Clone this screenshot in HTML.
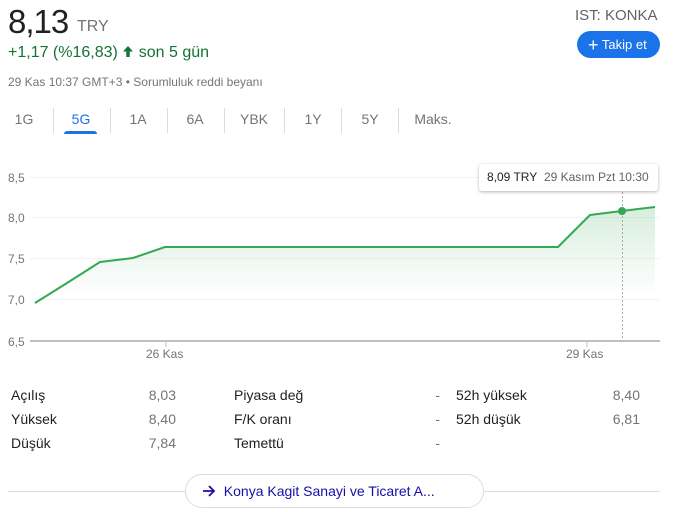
<!DOCTYPE html>
<html><head><meta charset="utf-8"><style>
*{margin:0;padding:0;box-sizing:border-box}
body{width:685px;height:512px;background:#fff;font-family:"Liberation Sans",sans-serif;position:relative;overflow:hidden;color:#202124}
.a{position:absolute;white-space:nowrap}
.tab{position:absolute;top:111px;font-size:14px;color:#70757a;transform:translateX(-50%)}
.sep{position:absolute;top:108px;width:1px;height:25px;background:#dadce0}
.lb{font-size:14px;color:#202124}
.vl{font-size:14px;color:#70757a;text-align:right}
</style></head><body>
<div class="a" style="left:8px;top:3px;font-size:33px;color:#202124;letter-spacing:-1px">8,13</div>
<div class="a" style="left:77px;top:18px;font-size:16px;color:#70757a">TRY</div>
<div class="a" style="left:8px;top:44px;font-size:16px;color:#137333">+1,17 (%16,83) <svg width="12" height="13" viewBox="0 0 12 13" style="vertical-align:-1px"><path d="M6 1L1 6.5h3.3V12h3.4V6.5H11z" fill="#137333"/></svg> son 5 gün</div>
<div class="a" style="left:8px;top:75px;font-size:12px;color:#70757a">29 Kas 10:37 GMT+3 • Sorumluluk reddi beyanı</div>
<div class="a" style="left:575px;top:7px;font-size:15px;color:#5f6368">IST: KONKA</div>
<div class="a" style="left:577px;top:31px;width:83px;height:27px;border-radius:14px;background:#1a73e8;color:#fff;font-size:13px;padding-left:11px;line-height:27px"><span style="font-size:18px;vertical-align:-2px">+</span> Takip et</div>
<div class="tab" style="left:24px">1G</div>
<div class="tab" style="left:81px;color:#1a73e8">5G</div>
<div class="tab" style="left:138px">1A</div>
<div class="tab" style="left:195px">6A</div>
<div class="tab" style="left:254px">YBK</div>
<div class="tab" style="left:313px">1Y</div>
<div class="tab" style="left:370px">5Y</div>
<div class="tab" style="left:433px">Maks.</div>
<div class="sep" style="left:53px"></div><div class="sep" style="left:110px"></div><div class="sep" style="left:167px"></div><div class="sep" style="left:224px"></div><div class="sep" style="left:284px"></div><div class="sep" style="left:341px"></div><div class="sep" style="left:398px"></div>
<div class="a" style="left:64px;top:131px;width:33px;height:3px;background:#1a73e8;border-radius:3px 3px 0 0"></div>
<svg class="a" style="left:0;top:150px" width="685" height="215" viewBox="0 150 685 215">
<defs><linearGradient id="g" x1="0" y1="207" x2="0" y2="295" gradientUnits="userSpaceOnUse"><stop offset="0" stop-color="#34a853" stop-opacity=".2"/><stop offset="1" stop-color="#34a853" stop-opacity="0"/></linearGradient></defs>
<g stroke="#f1f3f4" stroke-width="1"><line x1="30" y1="177.5" x2="660" y2="177.5"/><line x1="30" y1="217.5" x2="660" y2="217.5"/><line x1="30" y1="258.5" x2="660" y2="258.5"/><line x1="30" y1="299.5" x2="660" y2="299.5"/></g>
<g font-size="12" fill="#70757a" font-family="Liberation Sans"><text x="8" y="182">8,5</text><text x="8" y="222">8,0</text><text x="8" y="263">7,5</text><text x="8" y="304">7,0</text><text x="8" y="346">6,5</text>
<text x="146" y="358">26 Kas</text><text x="566" y="358">29 Kas</text></g>
<path d="M35 303L67 283L100 262L133 258L165 247L558 247L590 215L622 211L655 207L655 341L35 341Z" fill="url(#g)"/>
<path d="M35 303L67 283L100 262L133 258L165 247L558 247L590 215L622 211L655 207" fill="none" stroke="#34a853" stroke-width="2"/>
<line x1="30" y1="341" x2="660" y2="341" stroke="#bdc1c6" stroke-width="2"/>
<line x1="166" y1="341" x2="166" y2="347" stroke="#bdc1c6"/><line x1="587" y1="341" x2="587" y2="347" stroke="#bdc1c6"/>
<line x1="622.5" y1="192" x2="622.5" y2="341" stroke="#aaa" stroke-dasharray="2,2"/>
<circle cx="622" cy="211" r="4" fill="#34a853"/>
</svg>
<div class="a" style="left:479px;top:164px;width:179px;height:27px;background:#fff;box-shadow:0 1px 3px rgba(0,0,0,.3);border-radius:3px;font-size:12px;line-height:27px;padding-left:8px"><span style="color:#202124">8,09 TRY</span>&nbsp; <span style="color:#5f6368">29 Kasım Pzt 10:30</span></div>
<div class="a lb" style="left:11px;top:387px">Açılış</div><div class="a vl" style="left:100px;width:76px;top:387px">8,03</div>
<div class="a lb" style="left:11px;top:411px">Yüksek</div><div class="a vl" style="left:100px;width:76px;top:411px">8,40</div>
<div class="a lb" style="left:11px;top:435px">Düşük</div><div class="a vl" style="left:100px;width:76px;top:435px">7,84</div>
<div class="a lb" style="left:234px;top:387px">Piyasa değ</div><div class="a vl" style="left:400px;width:40px;top:387px">-</div>
<div class="a lb" style="left:234px;top:411px">F/K oranı</div><div class="a vl" style="left:400px;width:40px;top:411px">-</div>
<div class="a lb" style="left:234px;top:435px">Temettü</div><div class="a vl" style="left:400px;width:40px;top:435px">-</div>
<div class="a lb" style="left:456px;top:387px">52h yüksek</div><div class="a vl" style="left:560px;width:80px;top:387px">8,40</div>
<div class="a lb" style="left:456px;top:411px">52h düşük</div><div class="a vl" style="left:560px;width:80px;top:411px">6,81</div>
<div class="a" style="left:8px;top:491px;width:652px;height:1px;background:#dadce0"></div>
<div class="a" style="left:185px;top:474px;width:299px;height:34px;border:1px solid #dadce0;border-radius:17px;background:#fff;font-size:14px;line-height:32px;padding-left:16px;color:#1a0dab"><svg width="14" height="12" viewBox="0 0 14 12" style="vertical-align:-1px"><path d="M1 6h11M7 1l5 5-5 5" fill="none" stroke="#1a0dab" stroke-width="1.8"/></svg>&nbsp; Konya Kagit Sanayi ve Ticaret A...</div>
</body></html>
